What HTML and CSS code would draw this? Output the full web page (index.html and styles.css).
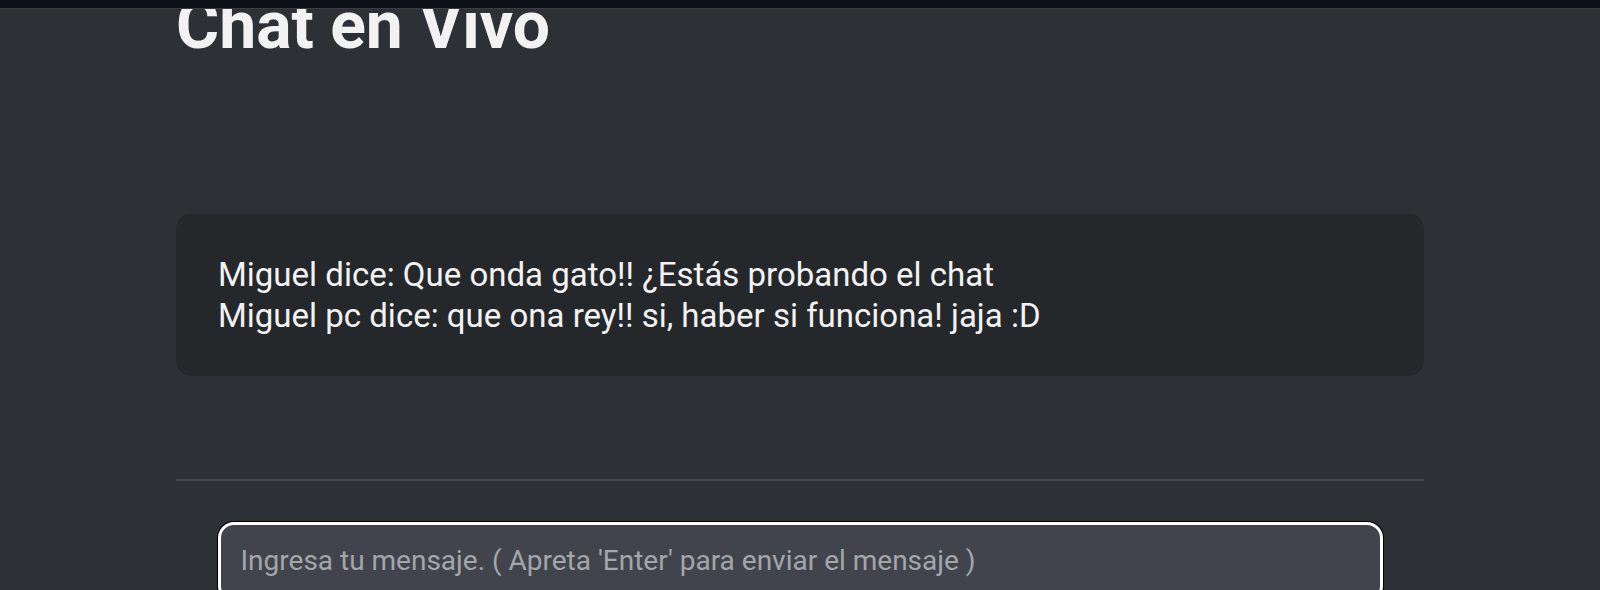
FILE: index.html
```html
<!DOCTYPE html>
<html lang="es">
<head>
<meta charset="utf-8">
<title>Chat en Vivo</title>
<link rel="stylesheet" href="styles.css">
</head>
<body>
<div class="topbar"></div>
<main class="page">
  <h1 class="title">Chat en Vivo</h1>
  <section class="messages">
    <p class="msg">Miguel dice: Que onda gato!! ¿Estás probando el chat</p>
    <p class="msg">Miguel pc dice: que ona rey!! si, haber si funciona! jaja :D</p>
  </section>
  <hr class="divider">
  <div class="composer">
    <input class="input" type="text" placeholder="Ingresa tu mensaje. ( Apreta 'Enter' para enviar el mensaje )">
  </div>
</main>
</body>
</html>
```

FILE: styles.css
```css
html, body {
  margin: 0;
  padding: 0;
  height: 100%;
  overflow: hidden;
}
body {
  background: #2d3035;
  font-family: Roboto, "Liberation Sans", sans-serif;
  color: #f2f2f2;
}
.topbar {
  position: fixed;
  top: 0;
  left: 0;
  right: 0;
  height: 8px;
  background: #0d1117;
  border-bottom: 1px solid #3a3e44;
  z-index: 10;
}
.page {
  width: 1248px;
  margin: 0 auto;
  display: flex;
  flex-direction: column;
}
.title {
  margin: -10px 0 0 0;
  font-size: 66px;
  font-weight: 700;
  line-height: 72px;
  color: #f2f2f2;
}
.messages {
  margin-top: 152px;
  background: #25282b;
  border-radius: 15px;
  padding: 40px 42px 0;
  height: 162px;
  box-sizing: border-box;
}
.msg {
  margin: 0;
  font-size: 33px;
  line-height: 41px;
  color: #f2f2f2;
}
.divider {
  margin: 103px 0 0;
  border: 0;
  height: 2px;
  background: #45484d;
}
.composer {
  margin-top: 41px;
  display: flex;
  justify-content: center;
}
.input {
  width: 1165px;
  height: 80px;
  box-sizing: border-box;
  background: #41444c;
  border: 3px solid #ffffff;
  box-shadow: 0 0 0 1px #000;
  border-radius: 16px;
  padding: 0 20px 4px;
  font-family: Roboto, "Liberation Sans", sans-serif;
  font-size: 28px;
  color: #f2f2f2;
  outline: none;
}
.input::placeholder {
  color: #a3a6ab;
}
```
